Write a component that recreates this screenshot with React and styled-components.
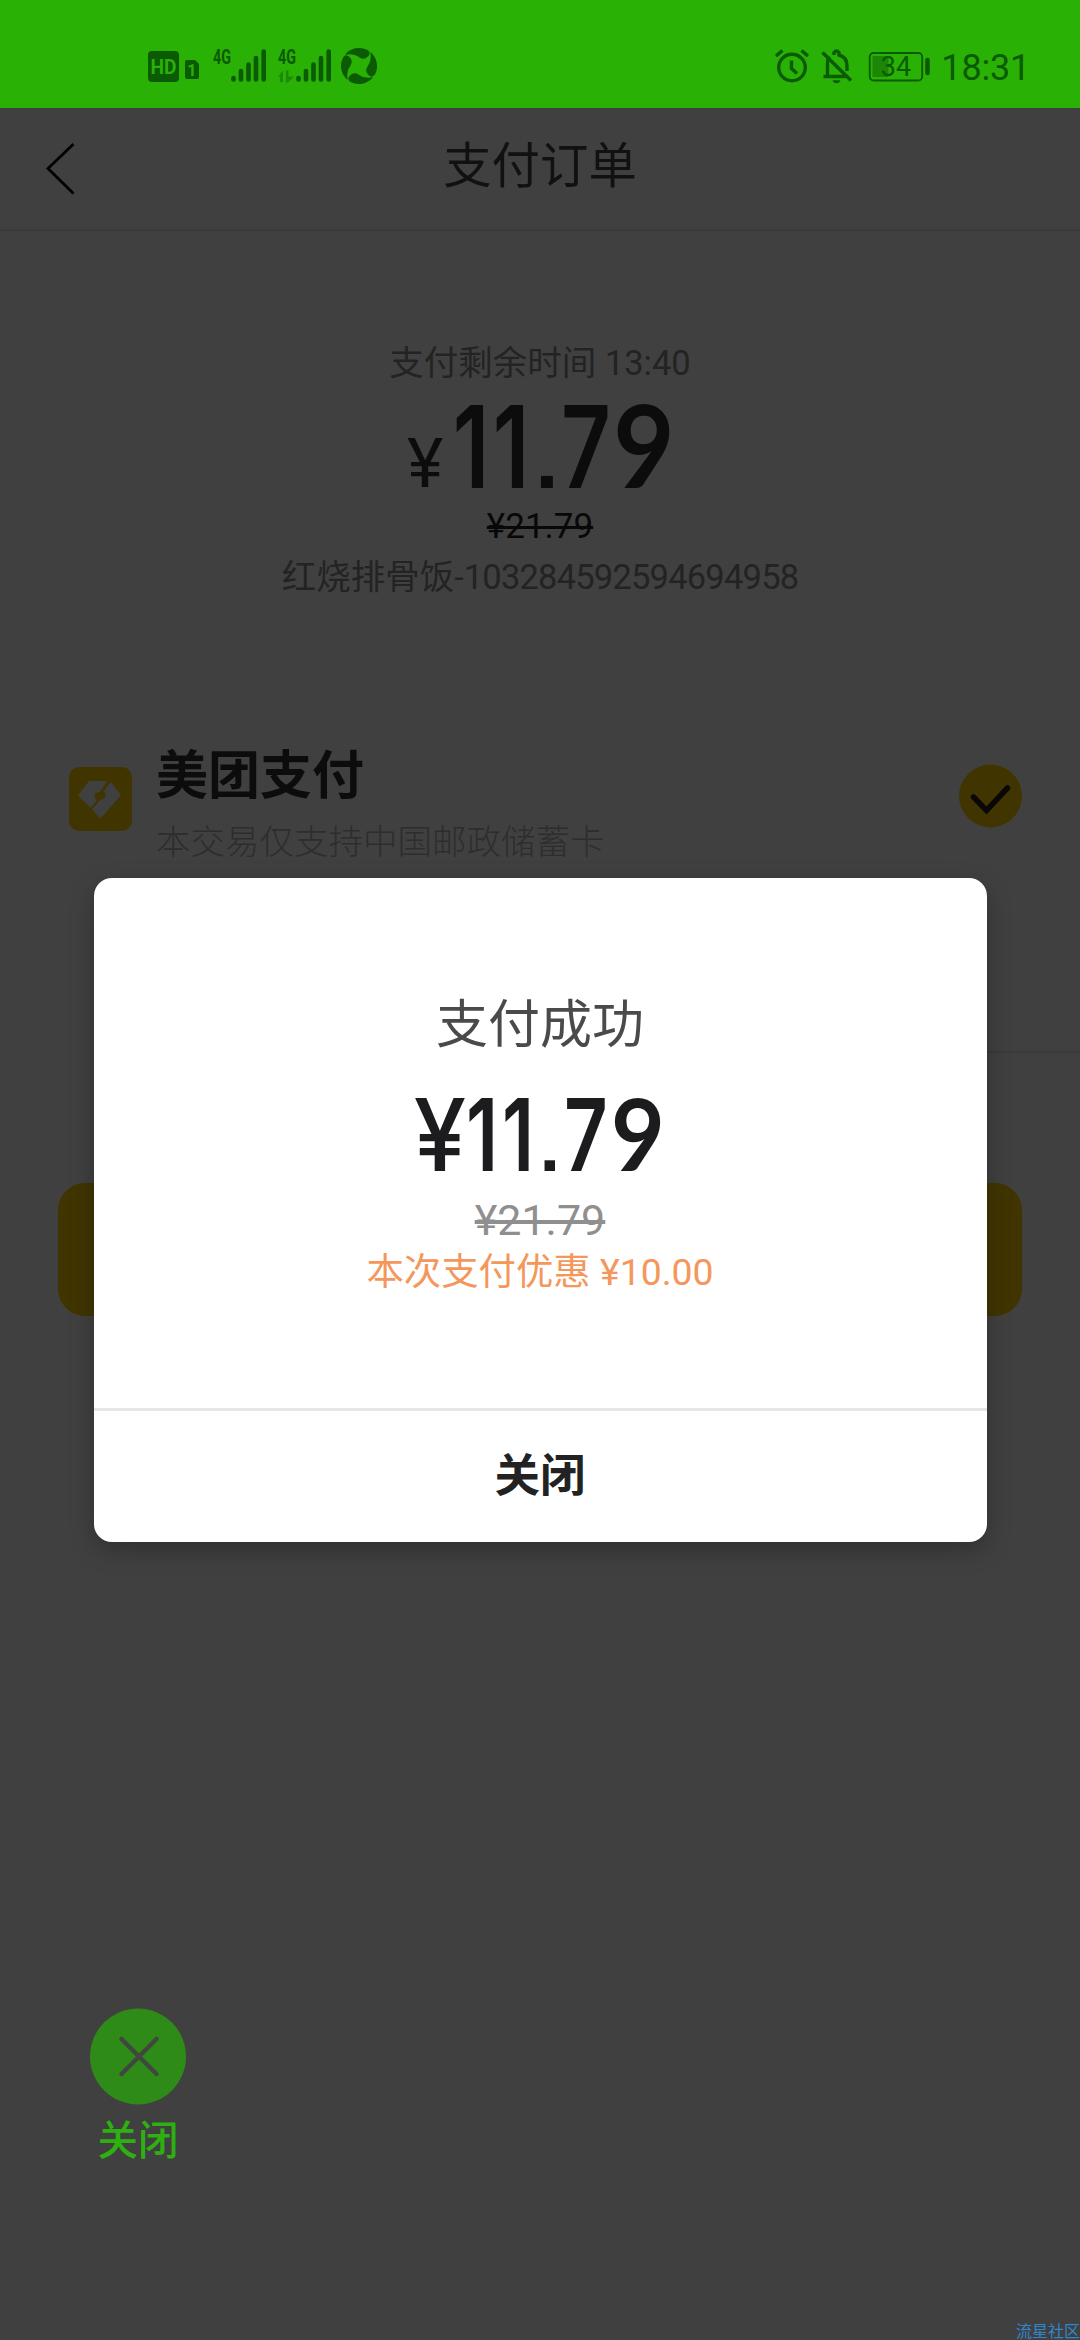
import React from 'react'
import styled, { createGlobalStyle } from 'styled-components'

const GlobalStyle = createGlobalStyle`
    * {
        box-sizing: border-box;
    }

    body {
        margin: 0;
        font-family: Roboto, "Noto Sans CJK SC", sans-serif;
    }

    button {
        padding: 0;
        border: none;
        background: none;
        font-family: inherit;
    }
`

const Screen = styled.div`
    position: relative;
    width: 1080px;
    height: 2340px;
    overflow: hidden;
    background-color: white;
`

const StatusBar = styled.div`
    height: 108px;
    padding: 24px 50px 0 147px;
    background-color: #2ab105;
    color: #0b5a04;
    display: flex;
    justify-content: space-between;
    align-items: center;
`

const StatusGroup = styled.div`
    display: flex;
    align-items: center;
    height: 84px;

    svg {
        display: block;
    }
`

const Clock = styled.span`
    margin-left: 9px;
    margin-top: 3px;
    font-size: 36px;
    line-height: 42px;
    letter-spacing: -0.2px;
`

const Header = styled.header`
    height: 123px;
    padding: 0 44px;
    border-bottom: 2px solid #e5e5e5;
    display: grid;
    grid-template-columns: 60px 1fr 60px;
    align-items: center;

    svg {
        display: block;
    }

    h1 {
        margin: 0 0 3px;
        text-align: center;
        font-size: 48.4px;
        font-weight: 400;
        line-height: 60px;
        color: #444;
    }
`

const Summary = styled.section`
    padding-top: 107px;
    display: flex;
    flex-direction: column;
    align-items: center;
`

const InfoText = styled.p`
    margin: 0;
    font-size: 34.5px;
    line-height: 50px;
    color: #8c8c8c;
`

const OrderNumber = styled.span`
    letter-spacing: -0.8px;
`

const PriceRow = styled.div`
    height: 114px;
    margin-left: 3px;
    display: flex;
    align-items: flex-end;
    color: #333;
`

const Yen = styled.span`
    width: 36px;
    margin-right: 11px;
    margin-bottom: 4px;
    display: flex;
    justify-content: center;
    font-size: 69px;
    line-height: 69px;
`

const FigureRow = styled.div`
    height: ${props => props.$size}px;
    margin-bottom: 1px;
    display: flex;
    align-items: baseline;
    font-family: Inter, Roboto, sans-serif;
    font-size: ${props => props.$size}px;
    font-weight: 600;
    line-height: 1;
`

const Glyph = styled.span`
    width: ${props => props.$width}em;
    display: flex;
    justify-content: center;

    span {
        display: block;
        font-family: ${props => props.$font || 'inherit'};
        font-weight: ${props => props.$weight || 600};
        transform: scaleX(${props => props.$scale || 0.76});
    }
`

const OldPrice = styled.p`
    margin: 0;
    font-size: ${props => props.$size}px;
    line-height: ${props => props.$line}px;
    color: ${props => props.$color};
    text-decoration: line-through;
    text-decoration-thickness: ${props => props.$stroke}px;
`

const Method = styled.section`
    margin: 136px 58px 0 69px;
    height: 130px;
    display: flex;
    align-items: center;

    svg {
        display: block;
        flex: none;
        margin-bottom: 8px;
    }

    svg:last-child {
        margin-bottom: 14px;
    }
`

const MethodText = styled.div`
    flex: 1;
    margin-left: 24px;
    margin-top: 7px;

    h2 {
        margin: 0;
        font-size: 52px;
        font-weight: 700;
        line-height: 70px;
        color: #333;
    }

    p {
        margin: 0;
        font-size: 34.5px;
        font-weight: 300;
        line-height: 60px;
        color: #b5b5b5;
    }
`

const Divider = styled.div`
    height: 2px;
    margin: 183px 0 0 157px;
    background-color: #e5e5e5;
`

const PayButton = styled.button`
    display: block;
    width: 964px;
    height: 133px;
    margin: 130px auto 0;
    border-radius: 27px;
    background-color: #ffd100;
`

/* dims the page under the status bar, dialog sits above it */
const Overlay = styled.div`
    position: absolute;
    top: 108px;
    left: 0;
    right: 0;
    bottom: 0;
    padding-top: 770px;
    background-color: rgba(0, 0, 0, 0.75);
    display: flex;
    flex-direction: column;
`

const Dialog = styled.div`
    width: 893px;
    height: 664px;
    margin: 0 auto;
    border-radius: 18px;
    background-color: white;
    box-shadow: 0 8px 24px rgba(0, 0, 0, 0.25);
    display: flex;
    flex-direction: column;
`

const DialogBody = styled.div`
    flex: 1;
    padding-top: 110px;
    display: flex;
    flex-direction: column;
    align-items: center;

    h3 {
        margin: 0;
        font-size: 52px;
        font-weight: 400;
        line-height: 76px;
        color: #4a4a4a;
    }
`

const PaidAmount = styled.div`
    height: 130px;
    padding-top: 18px;
    color: #1c1c1e;
`

const Discount = styled.p`
    margin: 1px 0 0;
    font-size: 37.4px;
    line-height: 50px;
    color: #f5975b;
`

const DialogButton = styled.button`
    height: 134px;
    padding-bottom: 10px;
    border-top: 3px solid #e6e6e6;
    font-size: 45.5px;
    font-weight: 700;
    color: #222;
`

const FloatingClose = styled.button`
    width: 96px;
    margin: 466px 0 0 90px;
    display: flex;
    flex-direction: column;
    align-items: center;
    font-size: 40.5px;
    font-weight: 500;
    line-height: 60px;
    color: #2db010;
    white-space: nowrap;

    svg {
        display: block;
        margin-bottom: 6px;
    }
`

const Watermark = styled.span`
    position: absolute;
    right: 0;
    bottom: 0;
    font-size: 16px;
    line-height: 16px;
    color: #2f86cf;
    white-space: nowrap;
`

const Figures = ({ size, glyphs }) => (
    <FigureRow $size={size}>
        {glyphs.map((glyph, index) => (
            <Glyph
                key={index}
                $width={glyph.width}
                $scale={glyph.scale}
                $font={glyph.font}
                $weight={glyph.weight}
            >
                <span>{glyph.char}</span>
            </Glyph>
        ))}
    </FigureRow>
)

const dot = { char: '.', font: '"Liberation Sans"', weight: 400, scale: 1.1 }
const nine = { char: '9', font: 'Lato', weight: 700, scale: 0.93 }

const orderGlyphs = [
    { char: '1', width: 0.298 },
    { char: '1', width: 0.404 },
    { ...dot, width: 0.219 },
    { char: '7', width: 0.465 },
    { ...nine, width: 0.561 },
]

const paidGlyphs = [
    { char: '¥', width: 0.52, scale: 0.94, weight: 500 },
    { char: '1', width: 0.32 },
    { char: '1', width: 0.41 },
    { ...dot, width: 0.22 },
    { char: '7', width: 0.49 },
    { ...nine, width: 0.56 },
]

const NetworkIcons = () => (
    <svg width="240" height="60" viewBox="147 36 240 60" fill="#0b5a04">
        <rect x="148" y="51" width="31" height="31" rx="4" />
        <text x="163.5" y="73.5" fontSize="20" fontWeight="700" textAnchor="middle" textLength="26" lengthAdjust="spacingAndGlyphs" fill="#2ab105">HD</text>
        <path d="M187 60h8l4 4v13q0 2-2 2h-10q-2 0-2-2v-15q0-2 2-2z" />
        <text x="191.8" y="75.5" fontSize="16" fontWeight="700" textAnchor="middle" fill="#2ab105">1</text>
        {[213, 278].map(x => (
            <g key={x}>
                <text x={x} y="64" fontSize="20.5" fontWeight="700" textLength="18" lengthAdjust="spacingAndGlyphs">4G</text>
                <path
                    d={`M${x + 20.5} 78v1.5M${x + 28} 71v8.5M${x + 35.5} 64.5v15M${x + 43} 58v21.5M${x + 50.7} 51.5v28`}
                    stroke="#0b5a04"
                    strokeWidth="4.6"
                    strokeLinecap="round"
                />
            </g>
        ))}
        <path d="M278 76.500l5-6v11.500h-3v-5.500zM286 70.500h2.500v6h5.500l-6 6h-2z" fill="#1c8a05" />
        <g transform="translate(359 66)">
            {[0, 90, 180, 270].map(angle => (
                <path
                    key={angle}
                    transform={`rotate(${angle})`}
                    d="M-14-11.3A18 18 0 0 1 8.500-15.900Q12.500-13 9-9.500Q5-5.500 0.500-8.500Q-5.500-13-14-11.300z"
                />
            ))}
        </g>
    </svg>
)

const SystemIcons = () => (
    <svg width="160" height="60" viewBox="772 36 160 60" fill="none" stroke="#0b5a04" strokeWidth="3.4">
        <circle cx="792" cy="67.5" r="13.3" />
        <path d="M791.500 60.500v8l5.500 5M776 56l6.500-5.500M808 56l-6.500-5.500" />
        <path d="M822.500 52.500l28.500 28M823.500 76.500h22M827.500 76v-13q0-4 2-6.500M834 55v-2.500q2.500-3 5 0v2.500q8 2 8 11v5" />
        <path d="M832.500 80.300h8q-1 3-4 3t-4-3z" fill="#0b5a04" stroke="none" />
        <rect x="869.7" y="53" width="52.5" height="27.5" rx="4" strokeWidth="1.8" />
        <rect x="872.5" y="56" width="16" height="21" fill="#1c8605" stroke="none" />
        <text x="896" y="76" fontSize="27" textAnchor="middle" fill="#0b5a04" stroke="none">34</text>
        <path d="M927.500 60v13" strokeWidth="4.5" strokeLinecap="round" />
    </svg>
)

const BackIcon = () => (
    <svg width="34" height="54" viewBox="0 0 34 54" fill="none" stroke="black" strokeWidth="2.8">
        <path d="M29.500 2L4 26.500L29.500 51.500" />
    </svg>
)

const MeituanIcon = () => (
    <svg width="63" height="64" viewBox="0 0 63 64">
        <rect width="63" height="64" rx="10" fill="#ffd100" />
        <path d="M20 14h18.500l-7.500 10.500q-5 1-5.500 4t2.500 4.500l-6.500 8L9 28.500z" fill="white" />
        <path d="M41.500 15l10.500 13L31.500 51.500L23 42.500l8-9.500q5-1 5.500-4.500t-2-4z" fill="white" />
    </svg>
)

const CheckIcon = () => (
    <svg width="63" height="64" viewBox="0 0 63 64">
        <circle cx="31.5" cy="32" r="31.5" fill="#ffd100" />
        <path d="M14.500 33l13 13.500L48.500 24" fill="none" stroke="#222" strokeWidth="5.5" strokeLinecap="round" />
    </svg>
)

const CloseIcon = () => (
    <svg width="96" height="97" viewBox="0 0 96 97">
        <circle cx="48" cy="48.5" r="48" fill="#2f8b18" />
        <path d="M31.500 31l35 35M66.500 31l-35 35" stroke="#40483d" strokeWidth="4.5" strokeLinecap="round" />
    </svg>
)

function App () {
    return(
        <Screen>
            <GlobalStyle />
            <StatusBar>
                <StatusGroup>
                    <NetworkIcons />
                </StatusGroup>
                <StatusGroup>
                    <SystemIcons />
                    <Clock>18:31</Clock>
                </StatusGroup>
            </StatusBar>
            <Header>
                <BackIcon />
                <h1>支付订单</h1>
            </Header>
            <Summary>
                <InfoText>支付剩余时间 13:40</InfoText>
                <PriceRow>
                    <Yen>¥</Yen>
                    <Figures size={114} glyphs={orderGlyphs} />
                </PriceRow>
                <OldPrice $size={35} $line={50} $color="#222" $stroke={3}>¥21.79</OldPrice>
                <InfoText>红烧排骨饭-<OrderNumber>103284592594694958</OrderNumber></InfoText>
            </Summary>
            <Method>
                <MeituanIcon />
                <MethodText>
                    <h2>美团支付</h2>
                    <p>本交易仅支持中国邮政储蓄卡</p>
                </MethodText>
                <CheckIcon />
            </Method>
            <Divider />
            <PayButton />
            <Overlay>
                <Dialog>
                    <DialogBody>
                        <h3>支付成功</h3>
                        <PaidAmount>
                            <Figures size={100} glyphs={paidGlyphs} />
                        </PaidAmount>
                        <OldPrice $size={43} $line={52} $color="#8f8f8f" $stroke={4}>¥21.79</OldPrice>
                        <Discount>本次支付优惠 ¥10.00</Discount>
                    </DialogBody>
                    <DialogButton>关闭</DialogButton>
                </Dialog>
                <FloatingClose>
                    <CloseIcon />
                    关闭
                </FloatingClose>
            </Overlay>
            <Watermark>流星社区</Watermark>
        </Screen>
    )
}

export default App
